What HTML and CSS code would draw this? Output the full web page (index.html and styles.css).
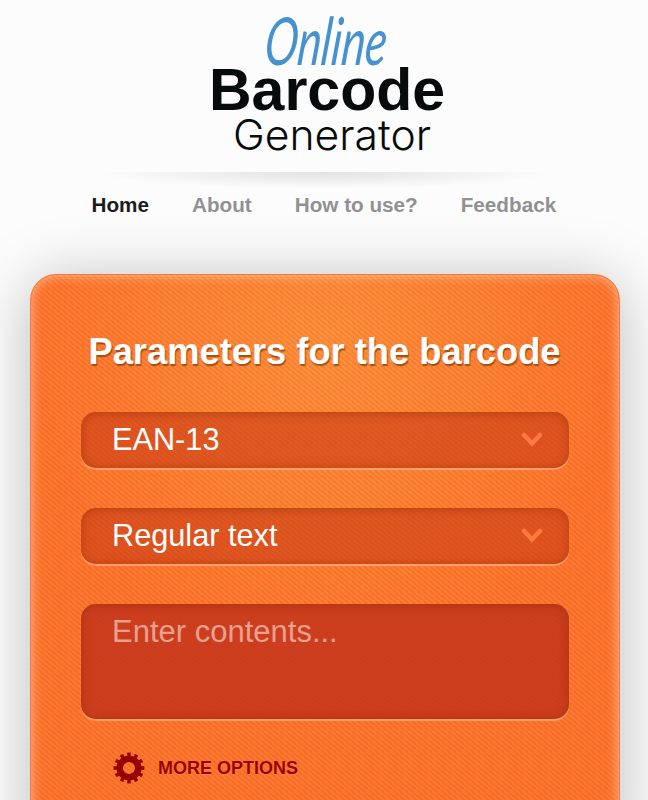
FILE: index.html
```html
<!DOCTYPE html>
<html lang="en">
<head>
    <meta charset="UTF-8">
    <meta name="viewport" content="width=device-width, initial-scale=1.0">
    <title>Online Barcode Generator</title>
    <link rel="stylesheet" href="styles.css">
</head>
<body>
    <header class="header">
        <a href="#" class="logo">
            <svg width="248" height="160" viewBox="0 0 248 160">
                <text class="logo-online" transform="translate(61 65) skewX(-6) scale(1 1.14)" textLength="122" lengthAdjust="spacingAndGlyphs">Online</text>
                <text class="logo-barcode" x="7" y="110" textLength="236" lengthAdjust="spacingAndGlyphs">Barcode</text>
                <text class="logo-generator" x="31" y="150" textLength="198" lengthAdjust="spacingAndGlyphs">Generator</text>
            </svg>
        </a>
        <div class="divider"></div>
        <nav class="menu">
            <a href="#" class="active">Home</a>
            <a href="#">About</a>
            <a href="#">How to use?</a>
            <a href="#">Feedback</a>
        </nav>
    </header>

    <main class="panel">
        <h1>Parameters for the barcode</h1>
        <div class="select">
            <span>EAN-13</span>
            <svg class="arrow" width="22" height="16" viewBox="0 0 22 16"><path d="M3 3 L11 11.5 L19 3"/></svg>
        </div>
        <div class="select">
            <span>Regular text</span>
            <svg class="arrow" width="22" height="16" viewBox="0 0 22 16"><path d="M3 3 L11 11.5 L19 3"/></svg>
        </div>
        <textarea class="contents" placeholder="Enter contents..."></textarea>
        <a href="#" class="options">
            <svg class="gear" width="32" height="32" viewBox="-16 -16 32 32">
                <circle class="gear-ring" r="9.3"/>
                <circle class="gear-teeth" r="13.4" pathLength="120"/>
            </svg>
            <span>More options</span>
        </a>
    </main>
</body>
</html>
```
FILE: styles.css
```css
* {
    box-sizing: border-box;
}

body {
    margin: 0;
    height: 800px;
    overflow: hidden;
    font-family: "Liberation Sans", Arial, sans-serif;
    background-color: #fcfcfc;
}

a {
    text-decoration: none;
}

.header {
    height: 274px;
}

.logo {
    display: block;
    width: 248px;
    height: 160px;
    margin-left: 202px;
}

.logo svg {
    display: block;
}

.logo-online {
    font-family: Lato, sans-serif;
    font-style: italic;
    font-weight: 400;
    font-size: 58px;
    fill: #4691d0;
}

.logo-barcode {
    font-weight: bold;
    font-size: 59px;
    fill: #080b0b;
}

.logo-generator {
    font-family: Inter, sans-serif;
    font-weight: 300;
    font-size: 42px;
    fill: #080b0b;
}

.divider {
    width: 456px;
    height: 22px;
    margin: 12px auto 0;
    background: radial-gradient(ellipse 50% 75% at 50% 0, #e1e1e1, #fcfcfc);
}

.menu {
    display: flex;
    gap: 43px;
    margin-left: 91.5px;
    font-size: 20.7px;
    font-weight: bold;
    line-height: 24px;
    margin-top: -1px;
}

.menu a {
    color: #919191;
}

.menu .active {
    color: #1b1b1b;
}

.panel {
    width: 590px;
    height: 580px;
    margin-left: 29.5px;
    padding: 56px 51px 0;
    border: 1px solid #ee7c42;
    border-radius: 26px;
    background: linear-gradient(45deg, rgba(190, 60, 10, 0.14) 25%, rgba(255, 170, 80, 0.07) 25%, rgba(255, 170, 80, 0.07) 50%, rgba(190, 60, 10, 0.14) 50%, rgba(190, 60, 10, 0.14) 75%, rgba(255, 170, 80, 0.07) 75%) 0 0 / 6px 5px,
        radial-gradient(ellipse 300px 330px at 50% 70px, #ff903b, #ff742d);
    box-shadow: inset 0 0 12px rgba(255, 225, 200, 0.7), 0 6px 62px rgba(0, 0, 0, 0.26);
}

.panel h1 {
    margin: 0 -20px 40px;
    font-size: 36.3px;
    line-height: 41px;
    text-align: center;
    white-space: nowrap;
    color: #fff;
    text-shadow: 1px 2px 1px rgba(125, 60, 10, 0.7);
}

.select,
.contents {
    width: 488px;
    margin: 0 0 38px -0.5px;
    border-radius: 15px;
    font-size: 31px;
    color: #fff;
    box-shadow: inset 0 1px 10px rgba(130, 35, 5, 0.45), 0 2px 1px rgba(255, 175, 125, 0.75);
}

.select {
    display: flex;
    align-items: center;
    justify-content: space-between;
    height: 56px;
    padding: 0 26px 0 31px;
    margin-bottom: 40px;
    font-size: 30.7px;
    background-color: rgba(205, 62, 22, 0.63);
}

.arrow path {
    fill: none;
    stroke: #fe7b3f;
    stroke-width: 4.5;
    stroke-linecap: round;
}

.contents {
    display: block;
    height: 115px;
    margin-bottom: 33px;
    padding: 10px 31px;
    border: none;
    outline: none;
    resize: none;
    font-family: inherit;
    line-height: 35px;
    background-color: rgba(198, 55, 28, 0.9);
}

.contents::placeholder {
    color: #e9a08e;
    opacity: 1;
}

.options {
    display: flex;
    align-items: center;
    gap: 13px;
    margin-left: 31.5px;
    font-size: 18px;
    font-weight: bold;
    text-transform: uppercase;
    color: #980300;
    text-shadow: 0 1px 1px rgba(255, 150, 90, 0.6);
}

.gear circle {
    fill: none;
    stroke: #980300;
}

.gear .gear-ring {
    stroke-width: 6.5;
}

.gear .gear-teeth {
    stroke-width: 4;
    stroke-dasharray: 5 5;
    stroke-dashoffset: 2.5;
}
```
